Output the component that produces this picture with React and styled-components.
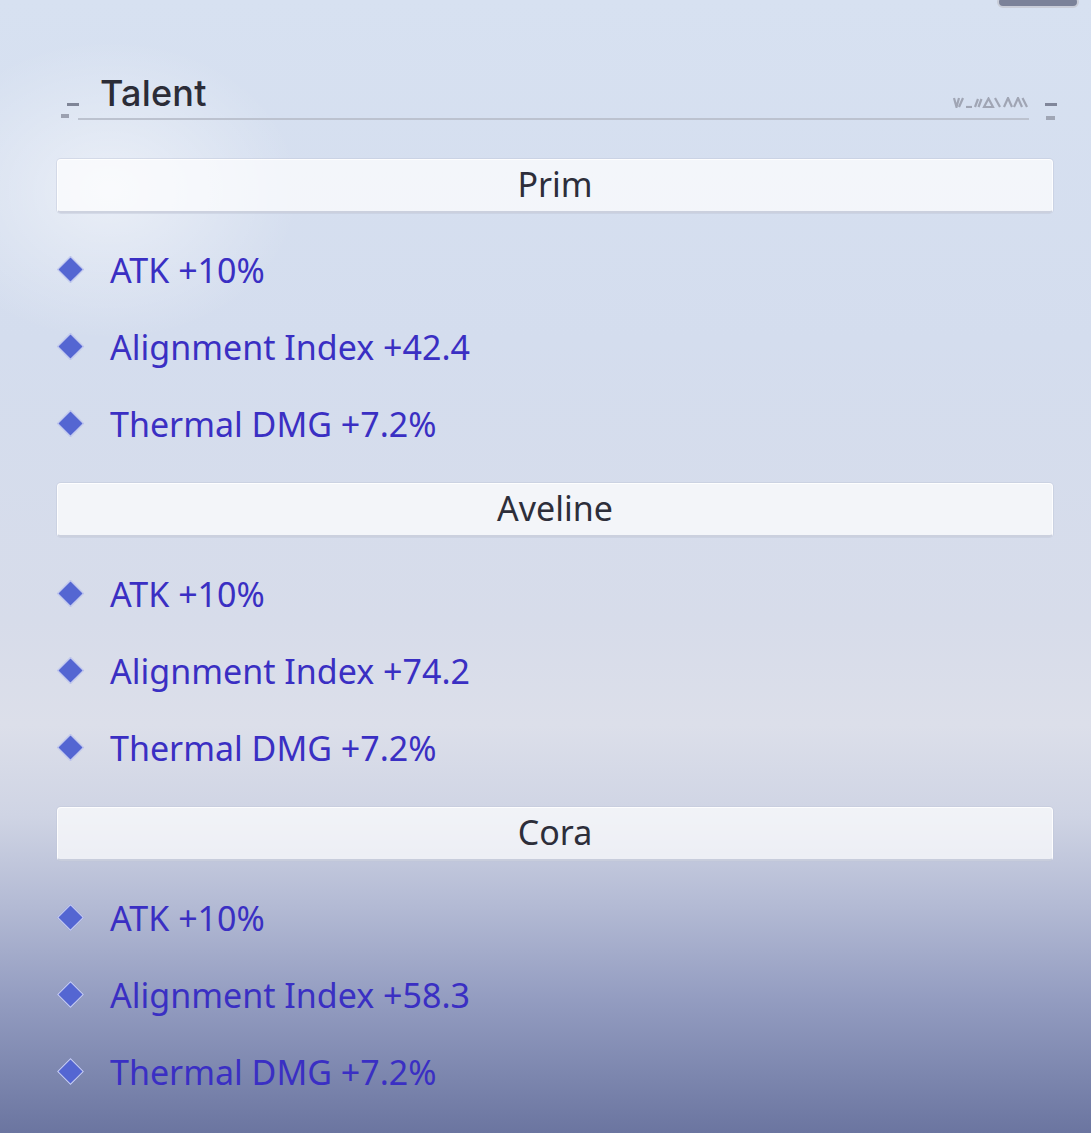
import React from "react";
import styled, { createGlobalStyle } from "styled-components";

const Global = createGlobalStyle`
  html, body { margin: 0; padding: 0; }
  body { background: #6b75a0; }
  * { box-sizing: border-box; }
`;

const Page = styled.div`
  position: relative;
  width: 1091px;
  min-height: 1133px;
  overflow: hidden;
  padding: 71px 0 0 57px;
  background:
    radial-gradient(ellipse 190px 150px at 110px 190px, rgba(255,255,255,0.5), rgba(255,255,255,0) 100%),
    linear-gradient(180deg, #d7e1f1 0%, #d4ddee 30%, #d7dcea 55%, #dcdfea 64%, #cfd4e4 72%, #b3bad4 80%, #949dc1 88%, #7c86ae 95%, #6b75a0 100%);
`;

const TopTab = styled.div`
  position: absolute;
  top: -4px;
  left: 997px;
  width: 82px;
  height: 12px;
  border-radius: 6px;
  background: #7b8299;
  border: 2px solid #c9cdd8;
`;

const HeaderRow = styled.div`
  display: flex;
  align-items: flex-end;
  margin-left: 4px;
  margin-bottom: 39px;
  & > * { flex-shrink: 0; }
`;

const Marks = styled.div`
  display: flex;
  flex-direction: column;
  align-items: flex-start;
  gap: ${(p) => (p.$side === "left" ? "8px" : "10px")};
  width: ${(p) => (p.$side === "left" ? "17px" : "12px")};
  margin-left: ${(p) => (p.$side === "left" ? "0" : "16px")};
  padding-bottom: ${(p) => (p.$side === "left" ? "2px" : "0")};
`;

const Dash = styled.span`
  display: block;
  width: ${(p) => p.$w}px;
  height: ${(p) => p.$h}px;
  margin-left: ${(p) => p.$offset || 0}px;
  background: ${(p) => p.$color};
`;

const HeaderMain = styled.div`
  width: 951px;
  display: flex;
  flex-direction: column;
`;

const TitleLine = styled.div`
  display: flex;
  align-items: flex-end;
  justify-content: space-between;
  padding-left: 22px;
  margin-bottom: 3px;
`;

const Title = styled.h2`
  margin: 0;
  font-family: Inter, "Noto Sans", sans-serif;
  font-weight: 500;
  font-size: 36px;
  line-height: 44px;
  color: #2b2c37;
  letter-spacing: 0.2px;
`;

const Glyphs = styled.svg`
  display: block;
  margin-bottom: 7px;
`;

const Rule = styled.div`
  height: 2px;
  background: #bcc2cf;
`;

const Section = styled.section`
  width: 996px;
  display: flex;
  flex-direction: column;
  margin-bottom: 21px;
`;

const Bar = styled.div`
  height: 54px;
  display: flex;
  align-items: center;
  justify-content: center;
  padding-bottom: 3px;
  border-radius: 4px;
  background: rgba(255, 255, 255, 0.7);
  border: 1px solid rgba(255, 255, 255, 0.85);
  border-bottom: 2px solid rgba(170, 178, 200, 0.55);
  box-shadow: 0 0 0 1px rgba(190, 197, 215, 0.45);
  font-family: "Noto Sans", sans-serif;
  font-size: 34px;
  color: #2d2e3a;
  margin-bottom: 18px;
`;

const List = styled.ul`
  list-style: none;
  margin: 0;
  padding: 0;
  display: flex;
  flex-direction: column;
`;

const Item = styled.li`
  height: 77px;
  display: flex;
  align-items: center;
  padding-left: 1px;
`;

const Diamond = styled.span`
  width: 24px;
  display: flex;
  justify-content: center;
  margin-right: 28px;
  &::before {
    content: "";
    display: block;
    width: 17px;
    height: 17px;
    background: #5466d2;
    border: 1px solid rgba(255, 255, 255, 0.7);
    transform: rotate(45deg);
  }
`;

const ItemText = styled.span`
  font-family: "Noto Sans", sans-serif;
  font-size: 34px;
  color: #3a2fc3;
  letter-spacing: 0;
  white-space: nowrap;
`;

const data = [
  { name: "Prim", stats: ["ATK +10%", "Alignment Index +42.4", "Thermal DMG +7.2%"] },
  { name: "Aveline", stats: ["ATK +10%", "Alignment Index +74.2", "Thermal DMG +7.2%"] },
  { name: "Cora", stats: ["ATK +10%", "Alignment Index +58.3", "Thermal DMG +7.2%"] },
];

function DecoGlyphs() {
  return (
    <Glyphs width="76" height="11" viewBox="0 0 76 11" fill="none" stroke="#a0a5b4" strokeWidth="2.2">
      <path d="M1 1 L3.5 10 L6 1 M6 10 L10 1" />
      <path d="M13 10 L19 10" />
      <path d="M22 10 L25 2 M25.5 10 L28.5 2" />
      <path d="M31 10 L35.5 1.5 L40 10 Z" />
      <path d="M42 1 L47 10" />
      <path d="M51 10 L55 1 L59 10" />
      <path d="M61 10 L65 1 L69 10 M69.5 1 L74 10" />
    </Glyphs>
  );
}

export default function App() {
  return (
    <>
      <Global />
      <Page>
        <TopTab />
        <HeaderRow>
          <Marks $side="left">
            <Dash $w={12} $h={3} $offset={6} $color="#7f8597" />
            <Dash $w={8} $h={4} $color="#9ca1b0" />
          </Marks>
          <HeaderMain>
            <TitleLine>
              <Title>Talent</Title>
              <DecoGlyphs />
            </TitleLine>
            <Rule />
          </HeaderMain>
          <Marks $side="right">
            <Dash $w={12} $h={3} $color="#80869a" />
            <Dash $w={9} $h={4} $offset={1} $color="#a0a6b5" />
          </Marks>
        </HeaderRow>
        {data.map((s) => (
          <Section key={s.name}>
            <Bar>{s.name}</Bar>
            <List>
              {s.stats.map((t) => (
                <Item key={t}>
                  <Diamond />
                  <ItemText>{t}</ItemText>
                </Item>
              ))}
            </List>
          </Section>
        ))}
      </Page>
    </>
  );
}
